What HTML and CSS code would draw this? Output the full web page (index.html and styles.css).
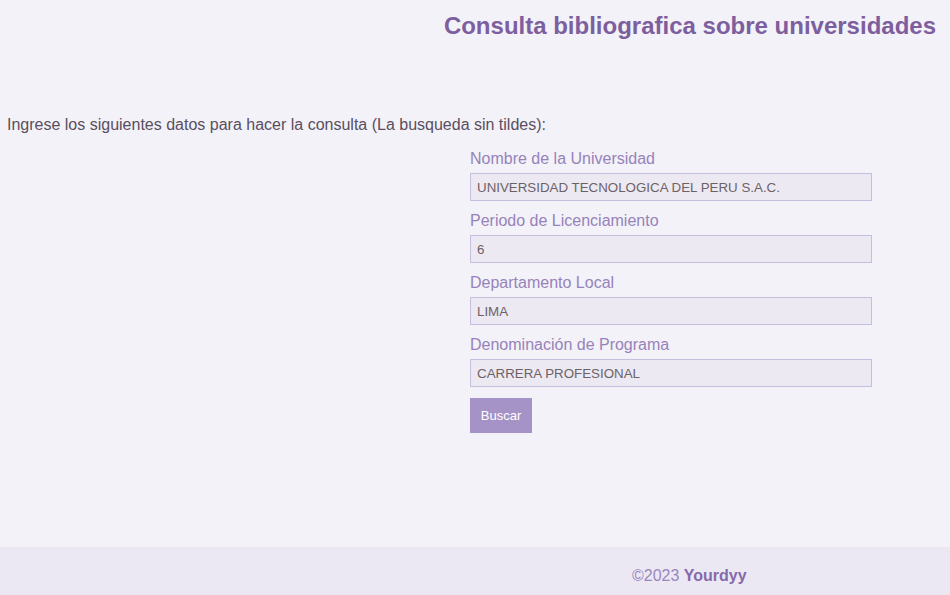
FILE: index.html
```html
<!DOCTYPE html>
<html lang="es">
<head>
<meta charset="utf-8">
<title>Consulta bibliografica</title>
<link rel="stylesheet" href="styles.css">
</head>
<body>
<div class="page">
  <header class="header">
    <h1 class="title">Consulta bibliografica sobre universidades</h1>
  </header>
  <main class="main">
    <p class="intro">Ingrese los siguientes datos para hacer la consulta (La busqueda sin tildes):</p>
    <form class="form">
      <label class="label">Nombre de la Universidad</label>
      <input class="field" type="text" value="UNIVERSIDAD TECNOLOGICA DEL PERU S.A.C.">
      <label class="label">Periodo de Licenciamiento</label>
      <input class="field" type="text" value="6">
      <label class="label">Departamento Local</label>
      <input class="field" type="text" value="LIMA">
      <label class="label">Denominación de Programa</label>
      <input class="field" type="text" value="CARRERA PROFESIONAL">
      <button class="btn" type="button">Buscar</button>
    </form>
  </main>
  <footer class="footer">
    <span class="copy">©2023 <b class="brand">Yourdyy</b></span>
  </footer>
</div>
</body>
</html>
```

FILE: styles.css
```css
* { box-sizing: border-box; }
html, body {
  margin: 0;
  padding: 0;
  height: 100%;
}
body {
  background: #f2f2f8;
  font-family: "Liberation Sans", Arial, sans-serif;
}
.page {
  min-height: 595px;
  display: flex;
  flex-direction: column;
}
.header {
  display: flex;
  justify-content: flex-end;
  padding: 12px 14px 0 0;
}
.title {
  margin: 0;
  font-size: 24px;
  font-weight: bold;
  color: #7d5e9e;
  line-height: 28px;
}
.main {
  flex: 1;
  padding-top: 76px;
}
.intro {
  margin: 0 0 0 7px;
  font-size: 16px;
  line-height: 18px;
  color: #5a4e60;
}
.form {
  display: flex;
  flex-direction: column;
  width: 402px;
  margin: 15px 0 0 470px;
}
.label {
  font-size: 16px;
  line-height: 20px;
  color: #9882ba;
  margin-bottom: 4px;
}
.field {
  height: 28px;
  width: 100%;
  border: 1px solid #c6bedc;
  background: #ece9f3;
  color: #6c6266;
  font-family: "Liberation Sans", Arial, sans-serif;
  font-size: 13.33px;
  padding: 0 6px;
  margin-bottom: 10px;
  outline: none;
}
.btn {
  align-self: flex-start;
  margin-top: 1px;
  width: 62px;
  height: 35px;
  border: none;
  background: #a592c6;
  color: #ffffff;
  font-family: "Liberation Sans", Arial, sans-serif;
  font-size: 13px;
  padding: 0;
}
.footer {
  height: 48px;
  background: #ebe8f4;
  display: flex;
  align-items: center;
  padding: 10px 0 0 632px;
}
.copy {
  font-size: 16px;
  color: #9a86bd;
}
.brand {
  color: #866aa8;
}
```
